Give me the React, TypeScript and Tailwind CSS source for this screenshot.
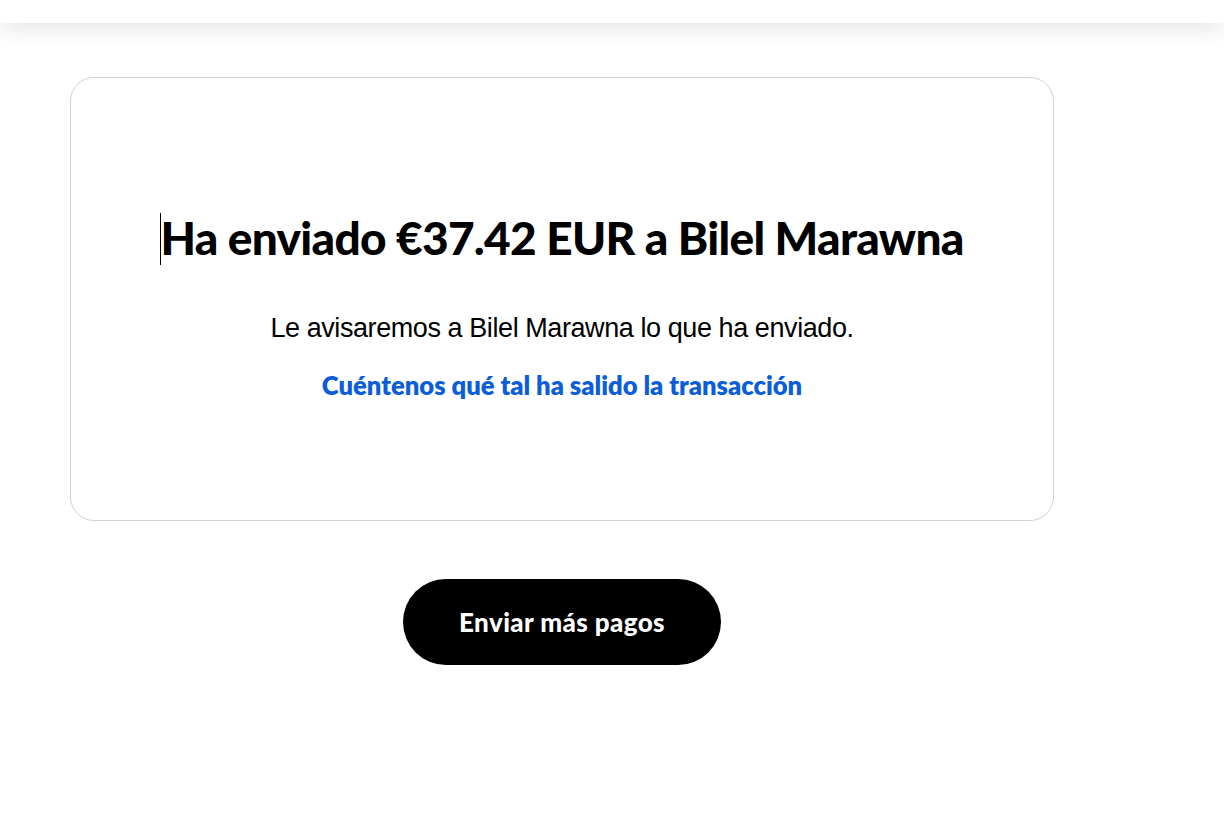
import React from 'react';

export default function App() {
  return (
    <div className="min-h-screen w-full bg-white relative" style={{ fontFamily: 'Lato, "Liberation Sans", sans-serif' }}>
      {/* top bar with shadow */}
      <div className="h-[23px] bg-white shadow-[0_4px_24px_rgba(0,0,0,0.12)] relative z-10" />

      <div className="w-[984px] ml-[70px] mt-[54px]">
        <div className="rounded-[24px] border border-[#d2d2d2] h-[444px] flex flex-col items-center pt-[132px]">
          <div className="relative">
            <span className="absolute left-[0px] top-[3px] w-px h-[52px] bg-black" />
            <h1 className="text-[46px] leading-[56px] font-black text-black tracking-[-0.72px]">
              Ha enviado €37.42 EUR a Bilel Marawna
            </h1>
          </div>
          <p
            className="mt-[47px] text-[27px] leading-[30px] text-black tracking-[-0.42px]"
            style={{ fontFamily: '"Liberation Sans", Arial, sans-serif' }}
          >
            Le avisaremos a Bilel Marawna lo que ha enviado.
          </p>
          <a href="#" className="mt-[27px] text-[25.6px] leading-[30px] font-extrabold text-[#0b5ed7]">
            Cuéntenos qué tal ha salido la transacción
          </a>
        </div>

        <div className="flex justify-center mt-[58px]">
          <button className="w-[318px] h-[86px] rounded-full bg-black text-white text-[26px] font-black tracking-[0.4px]">
            Enviar más pagos
          </button>
        </div>
      </div>
    </div>
  );
}
